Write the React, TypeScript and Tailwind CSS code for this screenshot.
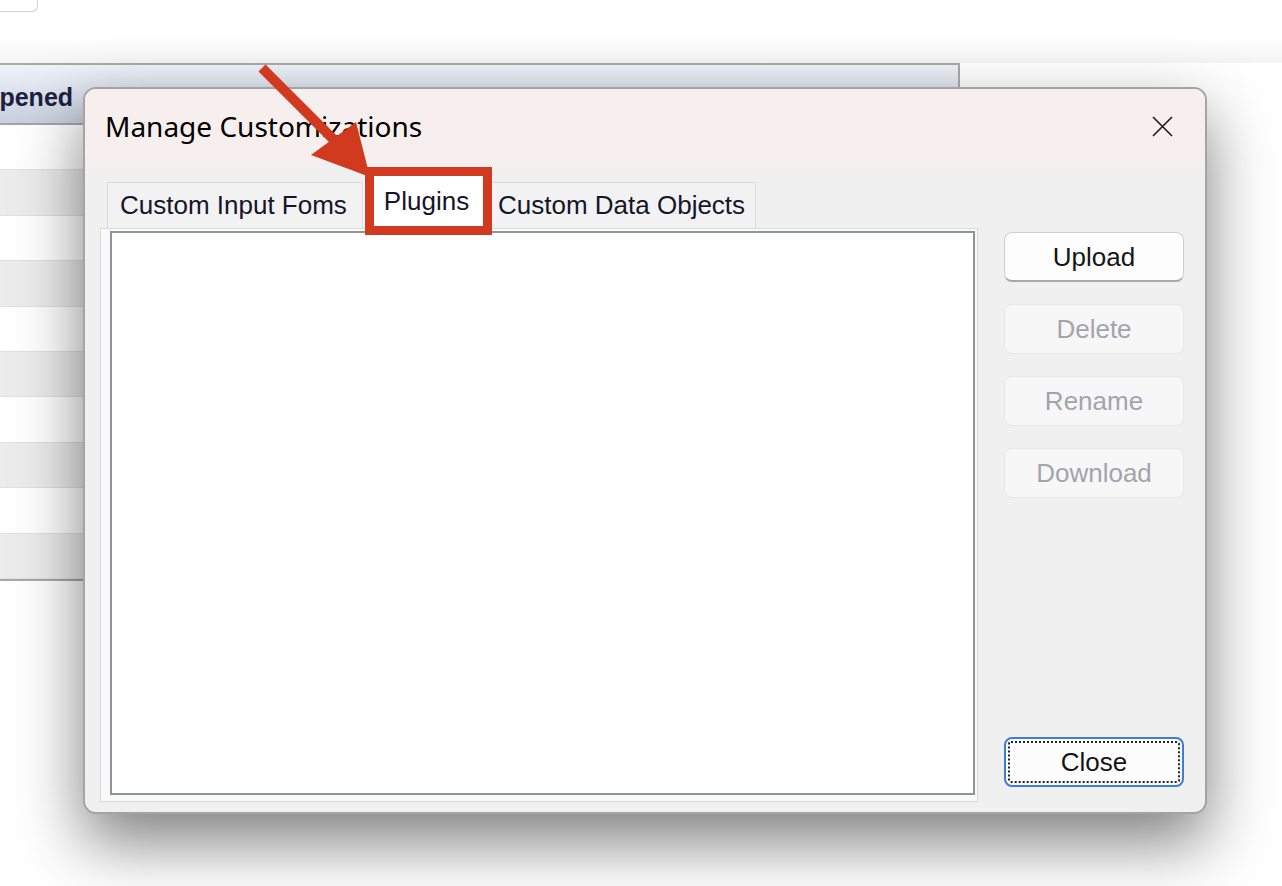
const rows = Array.from({ length: 10 }, (_, i) => i);

function SideButton({ label, disabled, focused }: { label: string; disabled?: boolean; focused?: boolean }) {
  if (focused) {
    return (
      <button className="relative h-[50px] w-[180px] rounded-[8px] border-2 border-[#3b7dd8] bg-[#fcfcfc] text-[26px] leading-none text-[#141414]">
        <span className="absolute inset-[2px] rounded-[3px] border-2 border-dotted border-[#222]" />
        <span className="relative">{label}</span>
      </button>
    );
  }
  if (disabled) {
    return (
      <button className="h-[50px] w-[180px] rounded-[8px] border border-[#e8e8e8] bg-[#f7f7f7] text-[26px] leading-none text-[#a3a4ac]">
        {label}
      </button>
    );
  }
  return (
    <button className="h-[50px] w-[180px] rounded-[8px] border border-[#d0d0d0] border-b-2 border-b-[#a9a9a9] bg-[#fdfdfd] text-[26px] leading-none text-[#161616]">
      {label}
    </button>
  );
}

export default function App() {
  return (
    <div className="relative h-[886px] w-[1282px] overflow-hidden bg-white font-['Liberation_Sans',Arial,sans-serif]">
      {/* window behind the dialog */}
      <div className="h-[63px] bg-gradient-to-b from-white from-60% to-[#f4f4f4]">
        <div className="h-[12px] w-[38px] rounded-br-[6px] border-r border-b border-[#cfcfcf] bg-white" />
      </div>
      <div className="w-[960px] border-t-2 border-r-2 border-b-2 border-[#a9a9a9]">
        <div className="flex h-[60px] items-center border-b-2 border-[#a0a6b0] bg-gradient-to-b from-[#eef2f9] to-[#c8d0dd] pt-[8px]">
          <span className="-ml-[20px] text-[25px] font-bold text-[#1b2140]">Opened</span>
        </div>
        {rows.map((r) => (
          <div
            key={r}
            className={`h-[45.4px] border-b border-[#e0e0e0] ${r % 2 === 1 ? 'bg-[#ececec]' : 'bg-white'}`}
          />
        ))}
      </div>

      {/* dialog */}
      <div className="absolute left-[83px] top-[87px] flex h-[727px] w-[1124px] flex-col overflow-hidden rounded-[13px] border-2 border-[#a4a4a4] bg-[#f0f0f0] shadow-[0_28px_64px_rgba(0,0,0,0.5)]">
        <div className="flex h-[74px] shrink-0 items-center justify-between bg-[#f7efed] pl-[20px] pr-[32px]">
          <span className="font-['Noto_Sans',sans-serif] text-[28px] text-black">Manage Customizations</span>
          <svg width="21" height="21" viewBox="0 0 21 21" className="text-[#1a1a1a]">
            <path d="M1 1 L20 20 M20 1 L1 20" stroke="currentColor" strokeWidth="1.6" fill="none" />
          </svg>
        </div>

        <div className="flex flex-1 pl-[15px] pr-[21px] pt-[13px] pb-[10px]">
          <div className="flex flex-1 flex-col">
            <div className="flex h-[52px] items-end pl-[7px]">
              <div className="flex h-[46px] w-[256px] items-center border border-b-0 border-[#dadada] bg-[#f2f2f2] pl-[12px] text-[26px] text-[#15152a]">
                Custom Input Foms
              </div>
              <div className="-mb-[3px] flex h-[55px] w-[127px] items-center justify-center bg-white pb-[4px] text-[26px] text-[#15152a]">
                Plugins
              </div>
              <div className="flex h-[46px] w-[266px] items-center border border-b-0 border-[#dadada] bg-[#f2f2f2] pl-[7px] text-[26px] text-[#15152a]">
                Custom Data Objects
              </div>
            </div>
            <div className="flex flex-1 border border-[#dcdcdc] bg-[#f9f9f9] pl-[9px] pr-[2px] pt-[2px] pb-[6px]">
              <div className="flex-1 border-2 border-[#8f949c] bg-white" />
            </div>
          </div>

          <div className="ml-[26px] flex flex-col gap-[22px] pt-[56px] pb-[15px]">
            <SideButton label="Upload" />
            <SideButton label="Delete" disabled />
            <SideButton label="Rename" disabled />
            <SideButton label="Download" disabled />
            <div className="mt-auto">
              <SideButton label="Close" focused />
            </div>
          </div>
        </div>
      </div>

      {/* annotation: red box + arrow */}
      <div className="pointer-events-none absolute left-[365px] top-[167px] z-20 h-[68px] w-[127px] border-[9px] border-[#d23a20]" />
      <svg className="pointer-events-none absolute left-0 top-0 z-20" width="1282" height="886" viewBox="0 0 1282 886">
        <line x1="262" y1="68" x2="338" y2="144" stroke="#d23a20" strokeWidth="10" />
        <polygon points="311,155 356,122 370,177" fill="#d23a20" />
      </svg>
    </div>
  );
}
